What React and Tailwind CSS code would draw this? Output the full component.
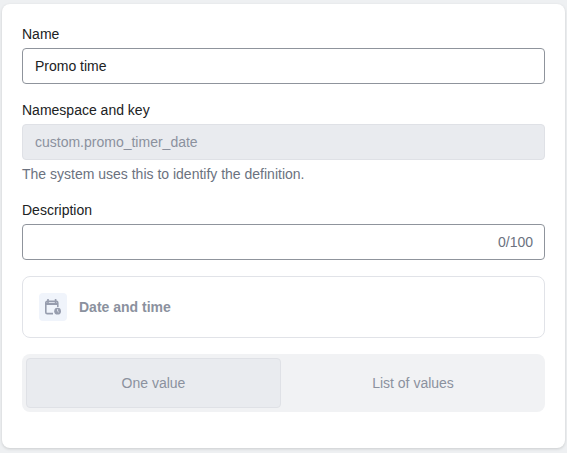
export default function App() {
  return (
    <div className="h-[453px] w-[567px] bg-[#eef0f2] pt-1 pl-0.5 pr-0.5 font-['Liberation_Sans',Arial,sans-serif] text-sm">
      <div className="h-[444px] rounded-lg bg-white px-5 pt-5 shadow-[0_1px_3px_rgba(0,0,0,0.15)]">
        <label className="mb-1 block leading-5 text-[#202223]">Name</label>
        <div className="flex h-9 items-center rounded border border-[#8f949c] px-3 text-[#202223]">Promo time</div>

        <label className="mt-4 mb-1 block leading-5 text-[#202223]">Namespace and key</label>
        <div className="flex h-9 items-center rounded border border-[#dfe1e6] bg-[#e9ebef] px-3 text-[#8b919e]">custom.promo_timer_date</div>
        <p className="mt-1 leading-5 text-[#6b7280]">The system uses this to identify the definition.</p>

        <label className="mt-4 mb-1 block leading-5 text-[#202223]">Description</label>
        <div className="flex h-9 items-center justify-end rounded border border-[#8f949c] pr-[11px] pl-3 text-[#6b7280]">0/100</div>

        <div className="mt-4 flex h-[62px] items-center gap-3 rounded-lg border border-[#e1e3e8] px-4">
          <div className="flex h-7 w-7 items-center justify-center rounded bg-[#f0f4fb]">
            <svg width="16" height="16" viewBox="0 0 16 16" fill="none">
              <path d="M3 0.6v3M10.6 0.6v3" stroke="#979dae" strokeWidth="1.7" strokeLinecap="round" />
              <path d="M8 14.6H2.2A1.4 1.4 0 0 1 0.8 13.2V3.8A1.4 1.4 0 0 1 2.2 2.4h9.2A1.4 1.4 0 0 1 12.8 3.8V8" stroke="#979dae" strokeWidth="1.6" />
              <path d="M0.8 5h12" stroke="#979dae" strokeWidth="2" />
              <circle cx="12.6" cy="12.2" r="3.4" fill="#979dae" />
              <path d="M12.6 10.5V12.2l.9 .7" stroke="#f0f4fb" strokeWidth="0.8" strokeLinecap="round" />
            </svg>
          </div>
          <span className="font-bold text-[#8b919e]">Date and time</span>
        </div>

        <div className="mt-4 flex h-[58px] rounded-lg bg-[#f1f2f4] py-1 pl-1 text-[#8b919e]">
          <div className="flex w-[255px] items-center justify-center rounded border border-[#dfe1e6] bg-[#e9ebef]">One value</div>
          <div className="flex flex-1 items-center justify-center">List of values</div>
        </div>
      </div>
    </div>
  );
}
